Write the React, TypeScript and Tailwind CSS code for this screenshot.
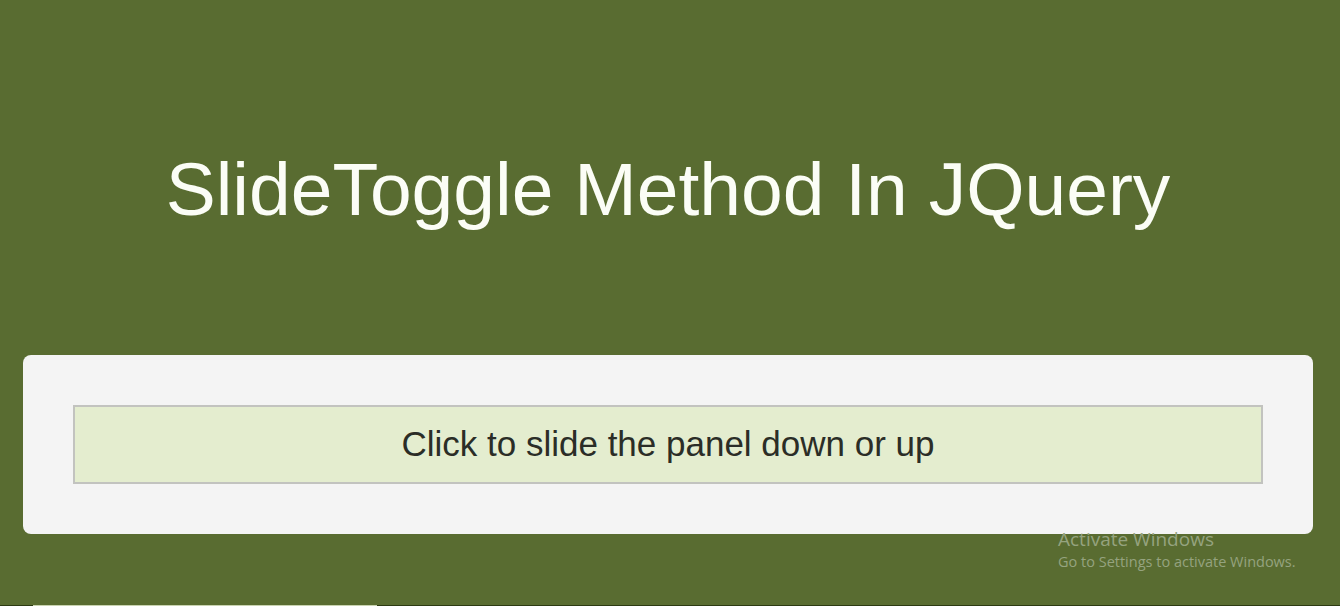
import { useState } from "react";

export default function App() {
  const [open, setOpen] = useState(false);

  return (
    <div
      className="relative h-[606px] overflow-hidden bg-[#596c31]"
      style={{ fontFamily: '"Liberation Sans", Arial, sans-serif' }}
    >
      {/* Heading */}
      <h1 className="pt-[152px] ml-[23px] mr-[27px] text-center text-[75px] leading-[75px] font-normal text-[#fbfdf6]">
        SlideToggle Method In JQuery
      </h1>

      {/* Panel */}
      <div className="mt-[128px] ml-[23px] mr-[27px] rounded-lg bg-[#f4f4f4] p-[50px]">
        <button
          onClick={() => setOpen(!open)}
          className="flex h-[79px] w-full items-center justify-center border-2 border-[#c2c3bf] bg-[#e4edcf] text-[35px] text-[#2b2d27]"
        >
          Click to slide the panel down or up
        </button>
        {open && (
          <div className="border-2 border-t-0 border-[#c2c3bf] bg-white p-6 text-center text-xl text-[#333]">
            Hello world!
          </div>
        )}
      </div>

      {/* Windows watermark */}
      <div
        className="absolute left-[1058px] top-[527px] text-[#95a37f]"
        style={{ fontFamily: '"Open Sans", "Noto Sans", sans-serif' }}
      >
        <div className="text-[19px] leading-[24px]">Activate Windows</div>
        <div className="text-[14.5px] leading-[20px] mt-[1px]">Go to Settings to activate Windows.</div>
      </div>

      {/* Bottom edge strip */}
      <div className="absolute bottom-0 left-0 right-0 flex h-px bg-[#2c3a12]">
        <div className="ml-[33px] w-[344px] bg-[#c9d3b0]" />
      </div>
    </div>
  );
}
